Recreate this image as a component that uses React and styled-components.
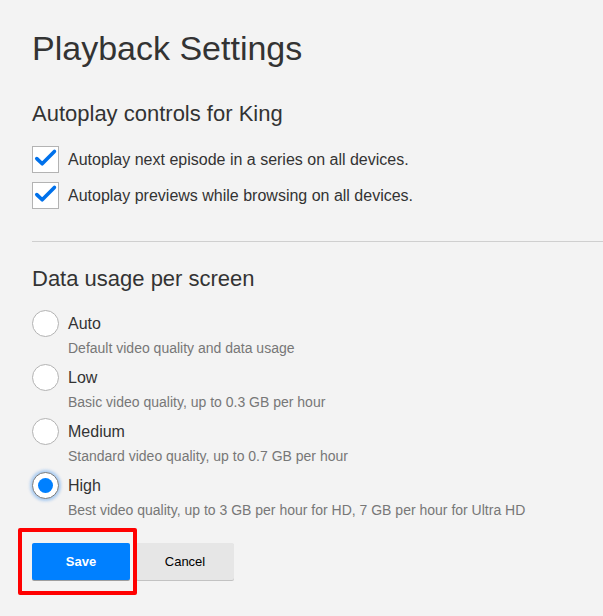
import React, { useState } from 'react';
import styled, { createGlobalStyle, css } from 'styled-components';

const GlobalStyle = createGlobalStyle`
  html, body {
    margin: 0;
    padding: 0;
    background: #f3f3f3;
  }
  body {
    font-family: "Liberation Sans", Arial, sans-serif;
    color: #333;
  }
`;

const Page = styled.div`
  padding: 28px 0 40px 32px;
`;

const Title = styled.h1`
  margin: 0;
  font-size: 34px;
  line-height: 40px;
  font-weight: 400;
  color: #333;
`;

const SectionTitle = styled.h2`
  margin: ${({ $top }) => $top}px 0 0;
  font-size: 22px;
  line-height: 28px;
  font-weight: 400;
  color: #333;
`;

const CheckList = styled.div`
  margin-top: 18px;
  display: flex;
  flex-direction: column;
  gap: 9px;
`;

const CheckRow = styled.label`
  display: flex;
  align-items: center;
  height: 27px;
  gap: 9px;
  cursor: pointer;
`;

const CheckBox = styled.span`
  position: relative;
  box-sizing: border-box;
  width: 27px;
  height: 27px;
  flex: none;
  background: #fff;
  border: 1px solid #b3b3b3;
  display: flex;
  align-items: center;
  justify-content: center;
`;

const Label = styled.span`
  font-size: 16px;
  line-height: 20px;
  color: #333;
`;

const Divider = styled.hr`
  margin: 32px 0 0;
  border: 0;
  border-top: 1px solid #cfcfcf;
  height: 0;
`;

const RadioList = styled.div`
  margin-top: 17px;
  display: flex;
  flex-direction: column;
  gap: 7px;
`;

const Option = styled.div`
  display: flex;
  flex-direction: column;
`;

const RadioRow = styled.label`
  display: flex;
  align-items: center;
  height: 27px;
  gap: 9px;
  cursor: pointer;
`;

const Radio = styled.span`
  box-sizing: border-box;
  width: 27px;
  height: 27px;
  flex: none;
  border-radius: 50%;
  background: #fff;
  border: 1px solid #b3b3b3;
  display: flex;
  align-items: center;
  justify-content: center;
  ${({ $checked }) =>
    $checked &&
    css`
      border-color: #7a7a7a;
      box-shadow: 0 0 3px 2px rgba(0, 113, 235, 0.3);
      &::after {
        content: '';
        width: 15px;
        height: 15px;
        border-radius: 50%;
        background: #0080ff;
      }
    `}
`;

const Description = styled.div`
  margin: 3px 0 0 36px;
  font-size: 14px;
  line-height: 17px;
  color: #777;
`;

const Actions = styled.div`
  margin-top: 24px;
  display: flex;
  gap: 6px;
`;

const SaveWrap = styled.span`
  position: relative;
  display: flex;
  &::after {
    content: '';
    position: absolute;
    top: -15px;
    left: -14px;
    right: -7px;
    bottom: -15px;
    border: 4px solid #ff0000;
    border-radius: 2px;
    pointer-events: none;
  }
`;

const Button = styled.button`
  height: 37px;
  min-width: 98px;
  padding: 0 2em;
  border: 0;
  border-radius: 2px;
  font-family: inherit;
  font-size: 13px;
  cursor: pointer;
  ${({ $primary }) =>
    $primary
      ? css`
          background: #0080ff;
          color: #fff;
          font-weight: 700;
          box-shadow: 0 1px 0 rgba(0, 0, 0, 0.35);
        `
      : css`
          background: #e6e6e6;
          color: #000;
          font-weight: 400;
          box-shadow: 0 1px 0 rgba(0, 0, 0, 0.2);
        `}
`;

const Check = () => (
  <svg width="27" height="27" viewBox="0 0 27 27" style={{ position: 'absolute', top: -1, left: -1 }}>
    <path
      d="M4.8 12.6 L10.2 17.8 L22.4 5.4"
      fill="none"
      stroke="#0071eb"
      strokeWidth="3.6"
      strokeLinecap="round"
      strokeLinejoin="round"
    />
  </svg>
);

const autoplay = [
  'Autoplay next episode in a series on all devices.',
  'Autoplay previews while browsing on all devices.',
];

const qualities = [
  { name: 'Auto', desc: 'Default video quality and data usage' },
  { name: 'Low', desc: 'Basic video quality, up to 0.3 GB per hour' },
  { name: 'Medium', desc: 'Standard video quality, up to 0.7 GB per hour' },
  { name: 'High', desc: 'Best video quality, up to 3 GB per hour for HD, 7 GB per hour for Ultra HD' },
];

export default function App() {
  const [checks, setChecks] = useState([true, true]);
  const [quality, setQuality] = useState('High');

  const toggle = i => setChecks(c => c.map((v, j) => (j === i ? !v : v)));

  return (
    <>
      <GlobalStyle />
      <Page>
        <Title>Playback Settings</Title>
        <SectionTitle $top={32}>Autoplay controls for King</SectionTitle>
        <CheckList>
          {autoplay.map((text, i) => (
            <CheckRow key={text} onClick={() => toggle(i)}>
              <CheckBox>{checks[i] && <Check />}</CheckBox>
              <Label>{text}</Label>
            </CheckRow>
          ))}
        </CheckList>
        <Divider />
        <SectionTitle $top={23}>Data usage per screen</SectionTitle>
        <RadioList>
          {qualities.map(q => (
            <Option key={q.name}>
              <RadioRow onClick={() => setQuality(q.name)}>
                <Radio $checked={quality === q.name} />
                <Label>{q.name}</Label>
              </RadioRow>
              <Description>{q.desc}</Description>
            </Option>
          ))}
        </RadioList>
        <Actions>
          <SaveWrap>
            <Button $primary>Save</Button>
          </SaveWrap>
          <Button>Cancel</Button>
        </Actions>
      </Page>
    </>
  );
}
